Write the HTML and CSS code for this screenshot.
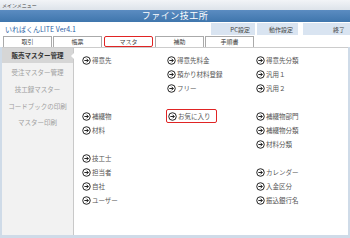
FILE: index.html
```html
<!DOCTYPE html>
<html lang="ja">
<head>
<meta charset="utf-8">
<link rel="stylesheet" href="styles.css">
</head>
<body>
<div class="window">
  <div class="titlebar">メインメニュー</div>
  <div class="header">ファイン技工所</div>
  <div class="subbar">
    <div class="brand">いればくんLITE Ver4.1</div>
    <div class="actions">
      <span class="act act-pc">PC設定</span>
      <span class="act act-op">動作設定</span>
      <span class="act act-end">終了</span>
    </div>
  </div>
  <div class="tabs">
    <span class="tab">取引</span>
    <span class="tab">帳票</span>
    <span class="tab tab-active">マスタ</span>
    <span class="tab">補助</span>
    <span class="tab">手順書</span>
  </div>
  <div class="main">
    <div class="side">
      <div class="side-item side-sel">販売マスター管理</div>
      <div class="side-item">受注マスター管理</div>
      <div class="side-item">技工録マスター</div>
      <div class="side-item">コードブックの印刷</div>
      <div class="side-item">マスター印刷</div>
    </div>
    <div class="content">
      <div class="col c1">
        <div class="it"><svg class="ic" viewBox="0 0 10 10"><circle cx="5" cy="5" r="4.2"/><path d="M2.6 5H7M5 3L7 5L5 7"/></svg>得意先</div>
        <div class="it blank"></div>
        <div class="it blank"></div>
        <div class="it blank"></div>
        <div class="it"><svg class="ic" viewBox="0 0 10 10"><circle cx="5" cy="5" r="4.2"/><path d="M2.6 5H7M5 3L7 5L5 7"/></svg>補綴物</div>
        <div class="it"><svg class="ic" viewBox="0 0 10 10"><circle cx="5" cy="5" r="4.2"/><path d="M2.6 5H7M5 3L7 5L5 7"/></svg>材料</div>
        <div class="it blank"></div>
        <div class="it"><svg class="ic" viewBox="0 0 10 10"><circle cx="5" cy="5" r="4.2"/><path d="M2.6 5H7M5 3L7 5L5 7"/></svg>技工士</div>
        <div class="it"><svg class="ic" viewBox="0 0 10 10"><circle cx="5" cy="5" r="4.2"/><path d="M2.6 5H7M5 3L7 5L5 7"/></svg>担当者</div>
        <div class="it"><svg class="ic" viewBox="0 0 10 10"><circle cx="5" cy="5" r="4.2"/><path d="M2.6 5H7M5 3L7 5L5 7"/></svg>自社</div>
        <div class="it"><svg class="ic" viewBox="0 0 10 10"><circle cx="5" cy="5" r="4.2"/><path d="M2.6 5H7M5 3L7 5L5 7"/></svg>ユーザー</div>
      </div>
      <div class="col c2">
        <div class="it"><svg class="ic" viewBox="0 0 10 10"><circle cx="5" cy="5" r="4.2"/><path d="M2.6 5H7M5 3L7 5L5 7"/></svg>得意先料金</div>
        <div class="it"><svg class="ic" viewBox="0 0 10 10"><circle cx="5" cy="5" r="4.2"/><path d="M2.6 5H7M5 3L7 5L5 7"/></svg>預かり材料登録</div>
        <div class="it"><svg class="ic" viewBox="0 0 10 10"><circle cx="5" cy="5" r="4.2"/><path d="M2.6 5H7M5 3L7 5L5 7"/></svg>フリー</div>
        <div class="it blank"></div>
        <div class="it fav"><svg class="ic" viewBox="0 0 10 10"><circle cx="5" cy="5" r="4.2"/><path d="M2.6 5H7M5 3L7 5L5 7"/></svg>お気に入り</div>
      </div>
      <div class="col c3">
        <div class="it"><svg class="ic" viewBox="0 0 10 10"><circle cx="5" cy="5" r="4.2"/><path d="M2.6 5H7M5 3L7 5L5 7"/></svg>得意先分類</div>
        <div class="it"><svg class="ic" viewBox="0 0 10 10"><circle cx="5" cy="5" r="4.2"/><path d="M2.6 5H7M5 3L7 5L5 7"/></svg>汎用１</div>
        <div class="it"><svg class="ic" viewBox="0 0 10 10"><circle cx="5" cy="5" r="4.2"/><path d="M2.6 5H7M5 3L7 5L5 7"/></svg>汎用２</div>
        <div class="it blank"></div>
        <div class="it"><svg class="ic" viewBox="0 0 10 10"><circle cx="5" cy="5" r="4.2"/><path d="M2.6 5H7M5 3L7 5L5 7"/></svg>補綴物部門</div>
        <div class="it"><svg class="ic" viewBox="0 0 10 10"><circle cx="5" cy="5" r="4.2"/><path d="M2.6 5H7M5 3L7 5L5 7"/></svg>補綴物分類</div>
        <div class="it"><svg class="ic" viewBox="0 0 10 10"><circle cx="5" cy="5" r="4.2"/><path d="M2.6 5H7M5 3L7 5L5 7"/></svg>材料分類</div>
        <div class="it blank"></div>
        <div class="it"><svg class="ic" viewBox="0 0 10 10"><circle cx="5" cy="5" r="4.2"/><path d="M2.6 5H7M5 3L7 5L5 7"/></svg>カレンダー</div>
        <div class="it"><svg class="ic" viewBox="0 0 10 10"><circle cx="5" cy="5" r="4.2"/><path d="M2.6 5H7M5 3L7 5L5 7"/></svg>入金区分</div>
        <div class="it"><svg class="ic" viewBox="0 0 10 10"><circle cx="5" cy="5" r="4.2"/><path d="M2.6 5H7M5 3L7 5L5 7"/></svg>振込銀行名</div>
      </div>
    </div>
  </div>
</div>
</body>
</html>
```
FILE: styles.css
```css
* { box-sizing: border-box; }
html, body { margin: 0; padding: 0; }
body {
  width: 350px;
  height: 238px;
  overflow: hidden;
  font-family: "Noto Sans CJK JP", "Noto Sans", sans-serif;
  color: #333;
  background: #fff;
}
.window {
  width: 350px;
  height: 238px;
  display: flex;
  flex-direction: column;
  background: #cfdbe8;
  padding: 0 2px 3px 2px;
}
.titlebar {
  height: 10px;
  margin: 0 -2px;
  padding-left: 2px;
  font-size: 5px;
  line-height: 10px;
  color: #444;
  background: linear-gradient(#f2f4f7, #dde3ea);
}
.header {
  height: 12px;
  margin: 0 -2px;
  background: linear-gradient(#5b8cc1, #3f76ad);
  color: #fff;
  font-size: 9px;
  line-height: 12px;
  text-align: center;
  letter-spacing: 0.5px;
}
.subbar {
  height: 13px;
  margin: 0 -2px;
  display: flex;
  justify-content: space-between;
  align-items: center;
  background: #fff;
}
.brand {
  padding-left: 5px;
  font-size: 7px;
  color: #2b5fa6;
}
.actions {
  display: flex;
  gap: 1px;
  align-self: stretch;
  padding-top: 1px;
}
.act {
  background: #d9e4f1;
  font-size: 6px;
  color: #444;
  display: flex;
  align-items: center;
  justify-content: flex-end;
  padding-right: 5px;
}
.act-pc { width: 44px; }
.act-op { width: 41px; margin-left: 1px; }
.act-end { width: 47px; margin-left: 4px; }
.tabs {
  height: 12px;
  margin: 0 -2px;
  padding: 1px 0 0 3px;
  display: flex;
  gap: 1px;
  background: #fff;
}
.tab {
  width: 49px;
  height: 11px;
  border: 1px solid #aaa;
  border-bottom: none;
  font-size: 6px;
  line-height: 10px;
  text-align: center;
  color: #444;
  background: #fff;
}
.tab-active {
  border: 1px solid #e02424;
  border-radius: 2px;
  margin: 0 1px;
}
.main {
  flex: 1;
  display: flex;
  background: #fff;
  border-top: 1px solid #ccc;
}
.side {
  width: 72px;
  background: #f2f2f2;
  border-right: 1px solid #c9c9c9;
}
.side-item {
  height: 16.8px;
  font-size: 6.5px;
  line-height: 16px;
  text-align: center;
  color: #a0a0a0;
}
.side-sel {
  position: relative;
  height: 15px;
  line-height: 15px;
  margin-bottom: 1px;
  background: #d6d6d6;
  color: #333;
  font-weight: bold;
}
.side-sel::after {
  content: "";
  position: absolute;
  right: -1px;
  top: 5px;
  border-style: solid;
  border-width: 3px 3px 3px 0;
  border-color: transparent #fff transparent transparent;
}
.content {
  flex: 1;
  display: flex;
  padding: 5px 0 0 8px;
}
.col { display: flex; flex-direction: column; }
.c1 { width: 85px; }
.c2 { width: 89px; }
.c3 { flex: 1; }
.it {
  height: 14px;
  display: flex;
  align-items: center;
  gap: 1px;
  font-size: 6.5px;
  color: #555;
}
.ic {
  width: 9px;
  height: 9px;
  flex: none;
  fill: none;
  stroke: #222;
  stroke-width: 1.1;
}
.fav {
  margin-left: -1px;
  padding-left: 1px;
  width: 51px;
  border: 1px solid #e02424;
  border-radius: 2px;
}
```
